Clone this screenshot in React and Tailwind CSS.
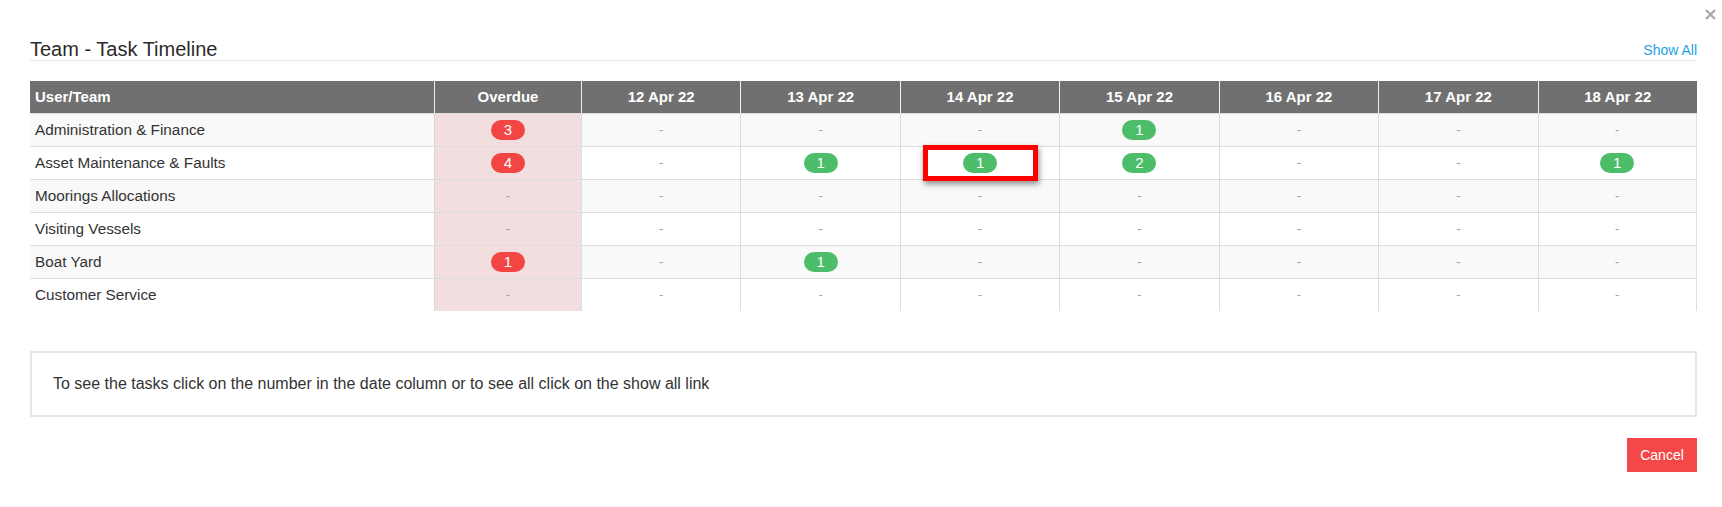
const dates = ["12 Apr 22", "13 Apr 22", "14 Apr 22", "15 Apr 22", "16 Apr 22", "17 Apr 22", "18 Apr 22"];

const rows = [
  { team: "Administration & Finance", overdue: 3, counts: [null, null, null, 1, null, null, null] },
  { team: "Asset Maintenance & Faults", overdue: 4, counts: [null, 1, 1, 2, null, null, 1] },
  { team: "Moorings Allocations", overdue: null, counts: [null, null, null, null, null, null, null] },
  { team: "Visiting Vessels", overdue: null, counts: [null, null, null, null, null, null, null] },
  { team: "Boat Yard", overdue: 1, counts: [null, 1, null, null, null, null, null] },
  { team: "Customer Service", overdue: null, counts: [null, null, null, null, null, null, null] },
];

// the annotated cell in the screenshot (row 2, 14 Apr)
const HIGHLIGHT = { row: 1, col: 2 };

function Badge({ value, red }) {
  return (
    <span
      className={`inline-block min-w-[34px] h-[20px] px-3 rounded-full text-white text-[15px] leading-[20px] text-center cursor-pointer ${
        red ? "bg-[#f24644]" : "bg-[#4cbe6a]"
      }`}
    >
      {value}
    </span>
  );
}

function Dash() {
  return <span className="text-[#a0a0a0] text-[13px]">-</span>;
}

export default function App() {
  return (
    <div className="relative w-full h-[507px] bg-white pl-[30px] pr-[25px] font-['Liberation_Sans',Arial,sans-serif] text-[#333]">
      {/* close */}
      <button className="absolute top-[9px] right-[6px] w-[11px] h-[11px] text-[#a8a8a8]">
        <svg width="11" height="11" viewBox="0 0 11 11" className="block">
          <path d="M1 1 L10 10 M10 1 L1 10" stroke="currentColor" strokeWidth="2.2" strokeLinecap="butt" />
        </svg>
      </button>

      {/* heading */}
      <div className="flex items-end justify-between pt-[38px] border-b border-[#e5e5e5]">
        <h2 className="text-[20px] leading-[22px] text-[#2b2b2b]">Team - Task Timeline</h2>
        <a className="text-[14px] leading-[20px] text-[#1f9fe6] cursor-pointer">Show All</a>
      </div>

      {/* timeline table */}
      <div className="mt-[20px] text-[15px]">
        <div className="grid grid-cols-[404px_147px_repeat(7,minmax(0,1fr))] h-[32px] bg-[#707070] text-white font-bold">
          <div className="flex items-center pl-[5px]">User/Team</div>
          <div className="flex items-center justify-center border-l border-[#f0f0f0]">Overdue</div>
          {dates.map((d) => (
            <div key={d} className="flex items-center justify-center border-l border-[#f0f0f0]">
              {d}
            </div>
          ))}
        </div>

        {rows.map((r, ri) => (
          <div
            key={r.team}
            className={`grid grid-cols-[404px_147px_repeat(7,minmax(0,1fr))] h-[33px] border-t border-[#dddddd] ${
              ri % 2 === 0 ? "bg-[#f9f9f9]" : "bg-white"
            }`}
          >
            <div className="flex items-center pl-[5px] text-[15.3px]">{r.team}</div>
            <div className="flex items-center justify-center border-l border-[#e2d2d2] bg-[#f2dede]">
              {r.overdue ? <Badge value={r.overdue} red /> : <Dash />}
            </div>
            {r.counts.map((c, ci) => (
              <div
                key={ci}
                className={`relative flex items-center justify-center border-l border-[#dddddd] ${
                  ci === 6 ? "border-r" : ""
                }`}
              >
                {c ? <Badge value={c} /> : <Dash />}
                {ri === HIGHLIGHT.row && ci === HIGHLIGHT.col && (
                  <div className="absolute z-10 -top-[2px] -bottom-[2px] left-[22px] right-[21px] border-[5px] border-[#ff0000] shadow-[1px_3px_6px_rgba(0,0,0,0.45)] pointer-events-none" />
                )}
              </div>
            ))}
          </div>
        ))}
      </div>

      {/* hint */}
      <div className="mt-[40px] h-[66px] flex items-center px-[21px] border-2 border-[#e6e6e6] text-[16px] text-[#333]">
        To see the tasks click on the number in the date column or to see all click on the show all link
      </div>

      <div className="flex justify-end mt-[21px]">
        <button className="w-[70px] h-[34px] bg-[#f44848] text-white text-[14px]">Cancel</button>
      </div>
    </div>
  );
}
